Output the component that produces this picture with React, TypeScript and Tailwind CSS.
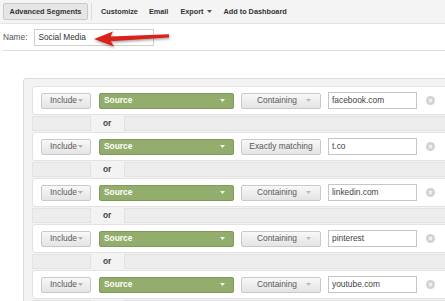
import React from "react";

const rules = [
  { op: "Containing", value: "facebook.com" },
  { op: "Exactly matching", value: "t.co" },
  { op: "Containing", value: "linkedin.com" },
  { op: "Containing", value: "pinterest" },
  { op: "Containing", value: "youtube.com" },
];

function Caret({ className }: { className?: string }) {
  return (
    <svg width="5" height="3" viewBox="0 0 5 3" className={className}>
      <path d="M0 0 L5 0 L2.5 3 Z" fill="currentColor" />
    </svg>
  );
}

function ClearIcon() {
  return (
    <svg width="9" height="9" viewBox="0 0 9 9">
      <circle cx="4.5" cy="4.5" r="4.5" fill="#d2d2d2" />
      <path d="M3 3 L6 6 M6 3 L3 6" stroke="#f7f7f7" strokeWidth="1.1" />
    </svg>
  );
}

function RuleCard({ op, value }: { op: string; value: string }) {
  const exact = op === "Exactly matching";
  return (
    <div className="flex items-center h-[29px] pl-[8px] bg-white border border-[#e2e2e2] rounded-[3px] w-[430px]">
      <div className="flex items-center justify-end w-[50px] h-[16px] pr-[7px] border border-[#c9c9c9] rounded-[2px] bg-gradient-to-b from-[#f8f8f8] to-[#e4e4e4] text-[#5a5a5a]">
        <span>Include</span>
        <Caret className="ml-[1px] text-[#b0b0b0]" />
      </div>
      <div className="flex items-center justify-between ml-[8px] w-[135px] h-[16px] px-[4px] pr-[8px] border border-[#7f9a5c] rounded-[2px] bg-[#93ae6c] text-white font-bold">
        <span>Source</span>
        <Caret className="text-[#f0f5e8]" />
      </div>
      <div
        className={`flex items-center ml-[7px] w-[80px] h-[16px] border border-[#c9c9c9] rounded-[2px] bg-gradient-to-b from-[#f8f8f8] to-[#e4e4e4] text-[#5a5a5a] ${
          exact ? "justify-center" : "justify-end pr-[9px]"
        }`}
      >
        <span>{op}</span>
        {!exact && <Caret className="ml-[9px] text-[#bbb]" />}
      </div>
      <div className="flex items-center ml-[7px] w-[89px] h-[17px] pl-[3px] border border-[#c6c6c6] bg-white text-[#444]">
        {value}
      </div>
      <div className="ml-[9px] flex items-center">
        <ClearIcon />
      </div>
    </div>
  );
}

function OrRow({ label }: { label: boolean }) {
  return (
    <div className="flex items-center h-[17px] py-[1px]">
      <div className="w-[59px] h-[15px] bg-[#ededed] border border-[#e3e3e3]" />
      <div className="w-[33px] pl-[12px] font-bold text-[#444]">{label ? "or" : ""}</div>
      <div className="flex-1 h-[15px] bg-[#ededed] border border-[#e3e3e3]" />
    </div>
  );
}

export default function App() {
  return (
    <div className="relative w-[445px] h-[301px] overflow-hidden bg-white font-['Liberation_Sans',Arial,sans-serif] text-[8.4px] leading-none text-[#333]">
      <div className="flex items-center h-[24px] bg-[#f4f4f4] border-b border-[#e4e4e4] pl-[3px] text-[7.3px] font-bold text-[#333]">
        <div className="flex items-center h-[17px] w-[85px] justify-center border border-[#c9c9c9] rounded-[2px] bg-[#e6e6e6]">
          Advanced Segments
        </div>
        <div className="ml-[3px] h-[17px] w-px bg-[#dcdcdc]" />
        <span className="ml-[9px]">Customize</span>
        <span className="ml-[11px]">Email</span>
        <span className="ml-[12px] flex items-center">
          Export
          <Caret className="ml-[4px] text-[#555]" />
        </span>
        <span className="ml-[11px]">Add to Dashboard</span>
      </div>

      <div className="flex items-center h-[27px] ml-[3px] border-b border-[#dedede] text-[8.3px] text-[#555]">
        <span>Name:</span>
        <div className="flex items-center ml-[7px] w-[120px] h-[17px] pl-[3px] border border-[#cfcfcf] bg-white text-[#333]">
          Social Media
        </div>
      </div>

      <svg className="absolute left-[90px] top-[28px]" width="84" height="22" viewBox="0 0 84 22">
        <defs>
          <filter id="sh" x="-20%" y="-50%" width="140%" height="200%">
            <feDropShadow dx="0.5" dy="1.5" stdDeviation="1" floodColor="#000" floodOpacity="0.35" />
          </filter>
        </defs>
        <g filter="url(#sh)">
          <path d="M4 11 L23 3.5 L20.5 8.6 L79 6.2 L79 9.4 L20.8 13.2 L24 18.5 Z" fill="#d8231b" />
        </g>
      </svg>

      <div className="mt-[27px] ml-[23px] w-[440px] pt-[7px] pl-[8px] bg-[#f3f3f3] border border-[#dcdcdc] rounded-[3px]">
        {rules.map((r, i) => (
          <div key={i}>
            <RuleCard op={r.op} value={r.value} />
            <OrRow label={i < rules.length - 1} />
          </div>
        ))}
      </div>
    </div>
  );
}
